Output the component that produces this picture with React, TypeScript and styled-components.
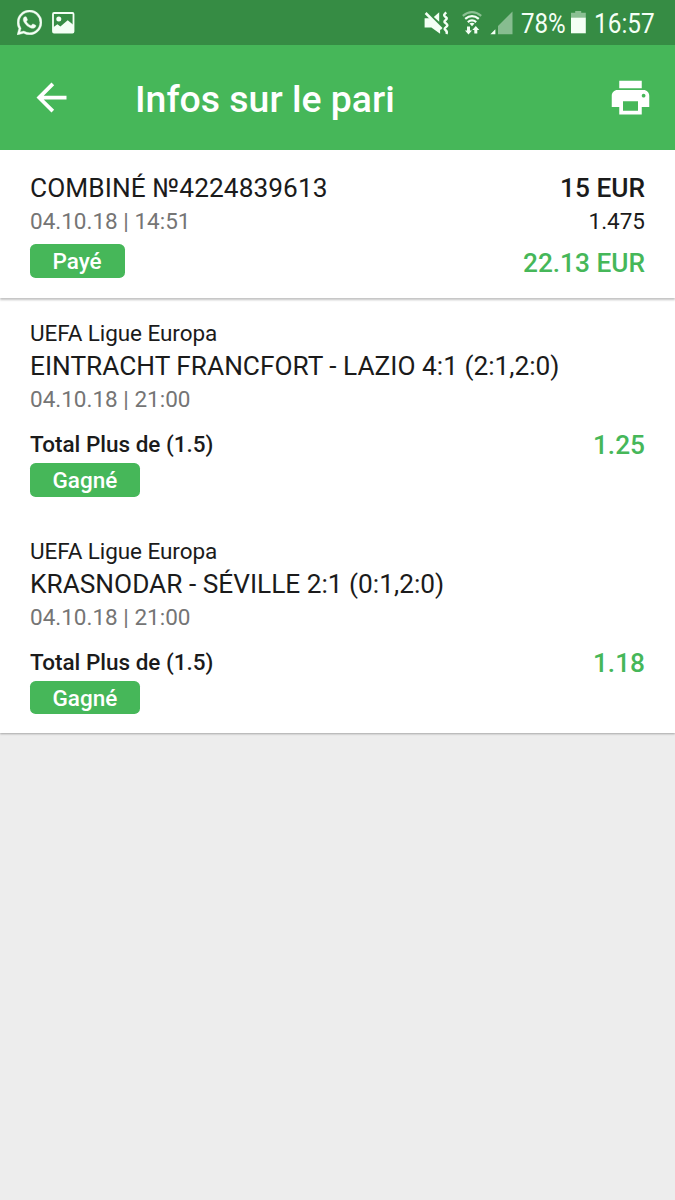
import React from 'react';
import styled, { createGlobalStyle } from 'styled-components';

const green = '#46b759';

const GlobalStyle = createGlobalStyle`
  * { box-sizing: border-box; }
  body {
    margin: 0;
    background: #ededed;
    font-family: Roboto, "Liberation Sans", sans-serif;
    color: #1b1b1b;
  }
`;

const Screen = styled.div`
  width: 675px;
  min-height: 1200px;
  background: #ededed;
`;

const StatusBar = styled.header`
  display: flex;
  align-items: center;
  justify-content: space-between;
  height: 45px;
  padding: 0 20px 0 17px;
  background: #368c44;
  color: #f4fff5;
`;

const StatusGroup = styled.div`
  display: flex;
  align-items: center;
  height: 44px;
`;

const StatusIcon = styled.svg<{ $gap?: number }>`
  display: block;
  flex: none;
  margin-right: ${(p) => p.$gap ?? 0}px;
`;

const StatusText = styled.span<{ $width: number; $scale: number }>`
  display: block;
  width: ${(p) => p.$width}px;
  padding-top: 1px;
  font-size: 28px;
  line-height: 45px;
  white-space: nowrap;
  transform: scaleX(${(p) => p.$scale});
  transform-origin: 0 50%;
`;

const AppBar = styled.div`
  display: flex;
  align-items: center;
  height: 105px;
  padding: 0 22.5px 0 28.5px;
  background: ${green};
  color: #fff;
`;

const AppTitle = styled.h1`
  flex: 1;
  margin: 0 0 0 61.5px;
  font-size: 37.4px;
  font-weight: 500;
  line-height: 44px;
  padding-top: 3px;
`;

const IconButton = styled.button`
  display: block;
  padding: 0 0 1px;
  border: 0;
  background: none;
  color: inherit;
  svg { display: block; }
`;

const Summary = styled.section`
  position: relative;
  display: flex;
  justify-content: space-between;
  height: 148px;
  padding: 21px 30px 0;
  background: #fff;
  box-shadow: 0 2px 2px rgba(0, 0, 0, 0.24);
`;

const Amounts = styled.div`
  text-align: right;
`;

const Selections = styled.section`
  height: 435px;
  padding-top: 19.4px;
  background: #fff;
  box-shadow: 0 1px 2px rgba(0, 0, 0, 0.3);
`;

const Selection = styled.article`
  height: 217.5px;
  padding: 0 30px;
`;

const Heading = styled.div<{ $strong?: boolean; $spacing?: number }>`
  font-size: 26.25px;
  line-height: 34px;
  font-weight: ${(p) => (p.$strong ? 500 : 400)};
  letter-spacing: ${(p) => p.$spacing ?? 0}px;
  white-space: nowrap;
`;

const Line = styled.div<{ $muted?: boolean; $strong?: boolean; $spacing?: number }>`
  font-size: 22.5px;
  line-height: 32px;
  color: ${(p) => (p.$muted ? '#757575' : 'inherit')};
  font-weight: ${(p) => (p.$strong ? 500 : 400)};
  letter-spacing: ${(p) => p.$spacing ?? 0}px;
`;

const Value = styled.div<{ $top?: number }>`
  margin-top: ${(p) => p.$top ?? 0}px;
  font-size: 26.25px;
  line-height: 34px;
  font-weight: 500;
  color: ${green};
`;

const OutcomeRow = styled.div`
  display: flex;
  justify-content: space-between;
  margin-top: 13px;
`;

const Badge = styled.span<{ $top: number }>`
  display: block;
  width: fit-content;
  min-width: 95px;
  height: 33.5px;
  margin-top: ${(p) => p.$top}px;
  padding: 0 22.5px;
  border-radius: 5.6px;
  background: ${green};
  color: #fff;
  font-size: 22.5px;
  font-weight: 500;
  line-height: 34px;
`;

const WhatsAppIcon = () => (
  <StatusIcon width="25" height="25" viewBox="0 0 24 24" fill="currentColor" stroke="currentColor" strokeWidth=".35" $gap={9}>
    <path d="M17.472 14.382c-.297-.149-1.758-.867-2.03-.967-.273-.099-.471-.148-.67.15-.197.297-.767.966-.94 1.164-.173.199-.347.223-.644.075-.297-.15-1.255-.463-2.39-1.475-.883-.788-1.48-1.761-1.653-2.059-.173-.297-.018-.458.13-.606.134-.133.298-.347.446-.52.149-.174.198-.298.298-.497.099-.198.05-.371-.025-.52-.075-.149-.669-1.612-.916-2.207-.242-.579-.487-.5-.669-.51-.173-.008-.371-.01-.57-.01-.198 0-.52.074-.792.372-.272.297-1.04 1.016-1.04 2.479 0 1.462 1.065 2.875 1.213 3.074.149.198 2.096 3.2 5.077 4.487.709.306 1.262.489 1.694.625.712.227 1.36.195 1.871.118.571-.085 1.758-.719 2.006-1.413.248-.694.248-1.289.173-1.413-.074-.124-.272-.198-.57-.347m-5.421 7.403h-.004a9.87 9.87 0 01-5.031-1.378l-.361-.214-3.741.982.998-3.648-.235-.374a9.86 9.86 0 01-1.51-5.26c.001-5.45 4.436-9.884 9.888-9.884 2.64 0 5.122 1.03 6.988 2.898a9.825 9.825 0 012.893 6.994c-.003 5.45-4.437 9.884-9.885 9.884m8.413-18.297A11.815 11.815 0 0012.05 0C5.495 0 .16 5.335.157 11.892c0 2.096.547 4.142 1.588 5.945L.057 24l6.305-1.654a11.882 11.882 0 005.683 1.448h.005c6.554 0 11.89-5.335 11.893-11.893a11.821 11.821 0 00-3.48-8.413Z" />
  </StatusIcon>
);

const PictureIcon = () => (
  <StatusIcon width="24" height="22" viewBox="0 0 24 22">
    <rect x="2" y="1" width="20.5" height="19.5" rx="1" fill="none" stroke="currentColor" strokeWidth="1.8" />
    <circle cx="7.8" cy="7" r="2.5" fill="currentColor" />
    <path d="M2 15.5 6.4 12.2l3 2.3 7.3-6.2 5.8 4.7V20.5H2Z" fill="currentColor" />
  </StatusIcon>
);

const MuteVibrateIcon = () => (
  <StatusIcon width="26" height="24" viewBox="0 0 26 24" $gap={12}>
    <path d="M.6 7.2h5.2L16.1 16.5v6.2L7.4 16.4H.6Z" fill="currentColor" />
    <path d="M15.2 1.2v9.6L9.8 6Z" fill="currentColor" />
    <path d="M1.6 2 17.6 18" stroke="currentColor" strokeWidth="2.6" />
    <path d="M22.2 1.4c-3.4 3.3-2 3.5 0 5 2.2 1.7-2.2 3-1.8 4.4.4 1.3 3.2 2 3 3.6-.2 1.4-3 2.2-2.8 3.6.1 1.2 3.6 1.6 1.8 5" fill="none" stroke="currentColor" strokeWidth="2.4" />
  </StatusIcon>
);

const WifiIcon = () => (
  <StatusIcon width="20" height="24" viewBox="0 0 20 24" $gap={8} fill="none" stroke="currentColor">
    <path d="M.8 4.8Q10-2.4 19.2 4.8" strokeWidth="2.2" opacity=".45" />
    <path d="M3.2 7.9Q10 2.4 16.8 7.9" strokeWidth="2.3" />
    <path d="M5.8 11.2Q10 7.6 14.2 11.2" strokeWidth="2.2" />
    <path d="m7.5 12.6 2.5 2.6 2.5-2.6Q10 10.8 7.5 12.6Z" fill="currentColor" stroke="none" />
    <path d="M5 15.6h3v4h2L6.5 23.4 3 19.6h2ZM12.3 22.4h3v-3.5h2L13.8 15l-3.5 3.9h2Z" fill="currentColor" stroke="none" />
  </StatusIcon>
);

const SignalIcon = () => (
  <StatusIcon width="23" height="24" viewBox="0 0 23 24" $gap={8} fill="currentColor">
    <path d="M22.5 .5v22.8H8V15Z" opacity=".43" />
    <path d="M.4 23.3h5v-5Z" />
  </StatusIcon>
);

const BatteryIcon = () => (
  <StatusIcon width="15" height="23" viewBox="0 0 15 23" $gap={8} fill="currentColor">
    <path d="M4.2 0h6v1.8h4.6v4.7H0V1.8h4.2Z" opacity=".45" />
    <path d="M0 6.5h14.8v15.8H0Z" />
  </StatusIcon>
);

const BackIcon = () => (
  <svg width="45" height="45" viewBox="0 0 24 24" fill="currentColor">
    <path d="M20 11H7.83l5.59-5.59L12 4l-8 8 8 8 1.41-1.41L7.83 13H20v-2z" />
  </svg>
);

const PrintIcon = () => (
  <svg width="45" height="45" viewBox="0 0 24 24" fill="currentColor">
    <path d="M19 8H5c-1.66 0-3 1.34-3 3v6h4v4h12v-4h4v-6c0-1.66-1.34-3-3-3zm-3 11H8v-5h8v5zm3-7c-.55 0-1-.45-1-1s.45-1 1-1 1 .45 1 1-.45 1-1 1zm-1-9H6v4h12V3z" />
  </svg>
);

const selections = [
  { league: 'UEFA Ligue Europa', match: 'EINTRACHT FRANCFORT - LAZIO 4:1 (2:1,2:0)', date: '04.10.18 | 21:00', market: 'Total Plus de (1.5)', status: 'Gagné', odds: '1.25' },
  { league: 'UEFA Ligue Europa', match: 'KRASNODAR - SÉVILLE 2:1 (0:1,2:0)', date: '04.10.18 | 21:00', market: 'Total Plus de (1.5)', status: 'Gagné', odds: '1.18' },
];

export default function App() {
  return (
    <Screen>
      <GlobalStyle />
      <StatusBar>
        <StatusGroup>
          <WhatsAppIcon />
          <PictureIcon />
        </StatusGroup>
        <StatusGroup>
          <MuteVibrateIcon />
          <WifiIcon />
          <SignalIcon />
          <StatusText $width={50} $scale={0.86}>78%</StatusText>
          <BatteryIcon />
          <StatusText $width={61.5} $scale={0.87}>16:57</StatusText>
        </StatusGroup>
      </StatusBar>
      <AppBar>
        <IconButton aria-label="Retour"><BackIcon /></IconButton>
        <AppTitle>Infos sur le pari</AppTitle>
        <IconButton aria-label="Imprimer"><PrintIcon /></IconButton>
      </AppBar>
      <Summary>
        <div>
          <Heading $spacing={0.07}>COMBINÉ №4224839613</Heading>
          <Line $muted>04.10.18 | 14:51</Line>
          <Badge $top={7.4}>Payé</Badge>
        </div>
        <Amounts>
          <Heading $strong>15 EUR</Heading>
          <Line>1.475</Line>
          <Value $top={9}>22.13 EUR</Value>
        </Amounts>
      </Summary>
      <Selections>
        {selections.map((s) => (
          <Selection key={s.match}>
            <Line $spacing={-0.08}>{s.league}</Line>
            <Heading>{s.match}</Heading>
            <Line $muted>{s.date}</Line>
            <OutcomeRow>
              <div>
                <Line $strong>{s.market}</Line>
                <Badge $top={3}>{s.status}</Badge>
              </div>
              <Value>{s.odds}</Value>
            </OutcomeRow>
          </Selection>
        ))}
      </Selections>
    </Screen>
  );
}
